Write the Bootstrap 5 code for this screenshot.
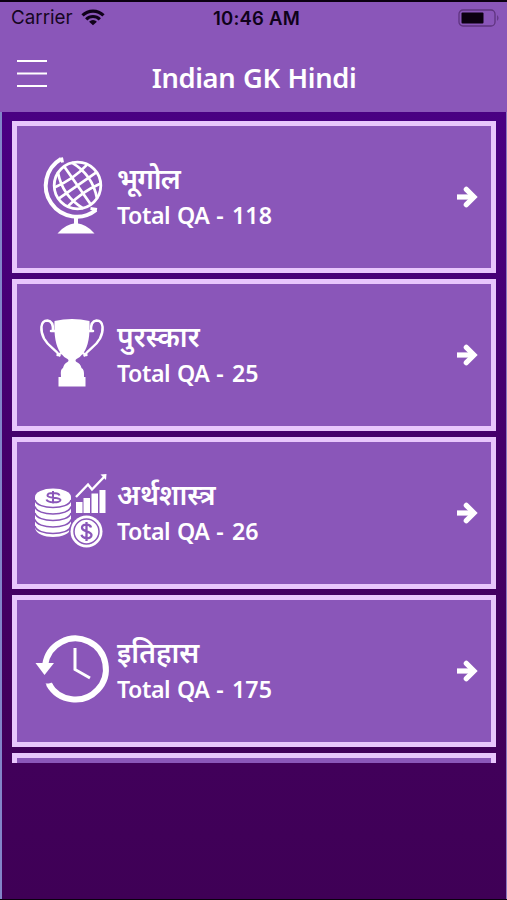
<!DOCTYPE html>
<html lang="hi">
<head>
<meta charset="utf-8">
<meta name="viewport" content="width=device-width, initial-scale=1">
<title>Indian GK Hindi</title>
<link href="https://cdn.jsdelivr.net/npm/bootstrap@5.3.0/dist/css/bootstrap.min.css" rel="stylesheet">
<style>
body{background:#000;font-family:"Noto Sans","Open Sans",sans-serif;color:#fff;overflow:hidden}
.screen{height:900px;border-top:2px solid #0b0010;border-bottom:1px solid #0b0010}
.top-bar{height:110px;background:#8a56b9;flex:none}
.status{height:32px;padding:0 7px 0 11px;color:#16061f}
.status>div{flex:1 1 0}
.status .clock{font:600 18.5px/32px Inter,sans-serif;letter-spacing:.25px;color:#10021a;flex:none;margin-left:2px}
.carrier{font:400 18.8px/32px Inter,sans-serif}
.title-row{height:78px;padding:0 15px 0 16px}
.title-row>div{flex:1 1 0}
.menu-btn{width:32px;height:30px;margin-top:-1px}
.app-title{font-size:27.3px;line-height:36px;font-weight:600;margin-top:9px;letter-spacing:-.35px;word-spacing:1px;white-space:nowrap}
.stage{background:linear-gradient(#4a0083,#45006b 42%,#42005c 75%,#3f0056);border-left:2px solid #8285c9;border-right:1px solid #8b78bd}
.topic-list{height:651px;padding:9px 10px 0 10px;gap:6px;overflow:hidden}
.topic{height:152px;flex:none;background:#8a56b9;border:5px solid #e8c6fc;color:#fff;padding:0 13px 0 14px}
.topic-icon{width:86px;height:100px;flex:none}
.topic-name{font-size:28px;line-height:36px;font-weight:600;white-space:nowrap;margin-top:-1px}
.topic-name.snug{letter-spacing:-.9px}
.topic-count{font-size:23.2px;line-height:36px;font-weight:600;white-space:nowrap;letter-spacing:-.45px;word-spacing:1.2px;margin-top:1px}
.topic-count span{letter-spacing:.1px;margin-left:2px}
</style>
<script src="https://cdn.jsdelivr.net/npm/bootstrap@5.3.0/dist/js/bootstrap.bundle.min.js"></script>
</head>
<body>
<div class="screen d-flex flex-column">
<header class="top-bar">
<div class="status d-flex align-items-center">
<div class="d-flex align-items-center"><span class="carrier">Carrier</span>
<svg class="ms-2" width="24" height="18" viewBox="0 0 24 18" fill="none" stroke="#10021a" stroke-width="3.2"><path d="M1.500 6.400a15 15 0 0 1 21 0M5.200 10.300a9.600 9.600 0 0 1 13.600 0"/><path d="M12 16.300l-3.900-3.600a5.500 5.500 0 0 1 7.800 0z" fill="#10021a" stroke="none"/></svg></div>
<div class="clock">10:46 AM</div>
<div class="d-flex justify-content-end"><svg width="42" height="18" viewBox="0 0 42 18"><rect x="1" y="1" width="36" height="16" rx="4" fill="none" stroke="#5f347f" stroke-width="1.300"/><rect x="3.500" y="3.500" width="22" height="11" rx="1" fill="#0b0010"/><path d="M39.200 6q2.600 3 0 6z" fill="#5f347f"/></svg></div>
</div>
<nav class="title-row d-flex align-items-center">
<div><svg class="menu-btn d-block" viewBox="0 0 32 30" stroke="#fff" stroke-width="1.800"><path d="M1 3h30M1 15.500h30M1 28h30"/></svg></div>
<h1 class="app-title mb-0">Indian GK Hindi</h1><div></div>
</nav>
</header>
<main class="stage flex-grow-1">
<div class="topic-list d-flex flex-column">
<a class="topic d-flex align-items-center text-decoration-none" href="#">
<svg class="topic-icon" viewBox="31 147 86 100" fill="none" stroke="#fff"><circle cx="77.500" cy="185.500" r="23.300" stroke-width="2.800"/><path d="M61 159A31 31 0 1 0 96 210" stroke-width="4"/><path d="M61.500 157.500l1 5M90.500 208.500l6.500 1" stroke-width="3"/><g transform="rotate(-35 77.500 185.500)" stroke-width="2.700"><path d="M77.500 162v47M69 163.500Q59 185.500 69 207.500M86 163.500Q96 185.500 86 207.500M58 174Q77.500 178 97 174M54.500 185.500h46M58 197Q77.500 193 97 197"/></g><path d="M76 218v6" stroke-width="4"/><path d="M57.500 233.500q7-9 18.500-10.500 11.500 1.500 18.500 10.500z" fill="#fff" stroke="none"/></svg>
<div class="flex-grow-1"><div class="topic-name snug">भूगोल</div><div class="topic-count">Total QA - <span>118</span></div></div>
<svg width="22" height="22" viewBox="0 0 22 22" fill="none" stroke="#fff" stroke-width="5.200"><path d="M1 11h15"/><path d="M10.300 3.300l7.700 7.700-7.700 7.700" stroke-linecap="round"/></svg></a>
<a class="topic d-flex align-items-center text-decoration-none" href="#">
<svg class="topic-icon" viewBox="31 305 86 100" fill="#fff"><path d="M54.500 321q17.500-4 35 0 1 22-6 32-3 4-7 6-2 1.500 0 3 4 1.500 5 6 3 1 2.500 9H85.500v9.500h-27V377H61q-1-8 2-9 1-4.500 4.500-6 2-1.500 0-3-4-2-7-6-7-10-6-32z"/><path d="M53 331q.5-10-5.500-10.500c-8 0-7 11-3.500 18 5 9 11 10 15.500 17M91 331q-.5-10 5.500-10.500c8 0 7 11 3.500 18-5 9-11 10-15.500 17M51 331h4m34 0h4M57.500 355l4-2m25 2-4-2" fill="none" stroke="#fff" stroke-width="2.500" stroke-linecap="round"/></svg>
<div class="flex-grow-1"><div class="topic-name">पुरस्कार</div><div class="topic-count">Total QA - <span>25</span></div></div>
<svg width="22" height="22" viewBox="0 0 22 22" fill="none" stroke="#fff" stroke-width="5.200"><path d="M1 11h15"/><path d="M10.300 3.300l7.700 7.700-7.700 7.700" stroke-linecap="round"/></svg></a>
<a class="topic d-flex align-items-center text-decoration-none" href="#">
<svg class="topic-icon" viewBox="31 463 86 100"><path d="M35 497v31c2 12 34 12 36 0v-31z" fill="#fff"/><ellipse cx="53" cy="497" rx="18" ry="8.500" fill="#fff"/><path d="M35 500c2 10 34 10 36 0M35 506.500c2 10 34 10 36 0M35 513c2 10 34 10 36 0M35 519.500c2 10 34 10 36 0M35 526c2 10 34 10 36 0" fill="none" stroke="#8a56b9" stroke-width="1.500"/><path d="M59.500 495.500c-1-3.300-12-3.200-12 0 0 3.200 13 1.200 13 4.600 0 3.200-13 2.900-14-.7M53 491v12.500" fill="none" stroke="#8a56b9" stroke-width="2"/><path d="M76 502h6.500v11H76zM83.500 498H90v15h-6.500zM91.500 493.500H98V513h-6.500zM99.500 490h6v23h-6z" fill="#fff"/><path d="M76 497l12-12.500 4 5 12.500-13" fill="none" stroke="#fff" stroke-width="2.400"/><path d="M106.500 474l-.5 6-5.500-5.500z" fill="#fff"/><circle cx="86.500" cy="531.500" r="17.500" fill="#8a56b9"/><circle cx="86.500" cy="531.500" r="16" fill="#fff"/><circle cx="86.500" cy="531.500" r="12.500" fill="none" stroke="#8a56b9" stroke-width="1.500"/><path d="M91 527.500c-1-4-9-3.500-9 .2 0 4.200 9.500 3 9.500 7.400 0 4.300-9 4-10-.3M86.500 522v19" fill="none" stroke="#8a56b9" stroke-width="2.300"/></svg>
<div class="flex-grow-1"><div class="topic-name">अर्थशास्त्र</div><div class="topic-count">Total QA - <span>26</span></div></div>
<svg width="22" height="22" viewBox="0 0 22 22" fill="none" stroke="#fff" stroke-width="5.200"><path d="M1 11h15"/><path d="M10.300 3.300l7.700 7.700-7.700 7.700" stroke-linecap="round"/></svg></a>
<a class="topic d-flex align-items-center text-decoration-none" href="#">
<svg class="topic-icon" viewBox="31 621 86 100" fill="none" stroke="#fff"><path d="M45.200 664.500A30.500 30.500 0 1 1 48.800 684" stroke-width="6"/><path d="M45.500 683.500h7l1 4-4 1.500z" fill="#fff" stroke="none"/><path d="M35.500 663h18.500l-9.500 12z" fill="#fff" stroke="none"/><path d="M75 648v21.500l15 8.500" stroke-width="3"/></svg>
<div class="flex-grow-1"><div class="topic-name">इतिहास</div><div class="topic-count">Total QA - <span>175</span></div></div>
<svg width="22" height="22" viewBox="0 0 22 22" fill="none" stroke="#fff" stroke-width="5.200"><path d="M1 11h15"/><path d="M10.300 3.300l7.700 7.700-7.700 7.700" stroke-linecap="round"/></svg></a>
<a class="topic d-flex" href="#" aria-label="Next topic"></a>
</div>
</main>
</div>
</body>
</html>
